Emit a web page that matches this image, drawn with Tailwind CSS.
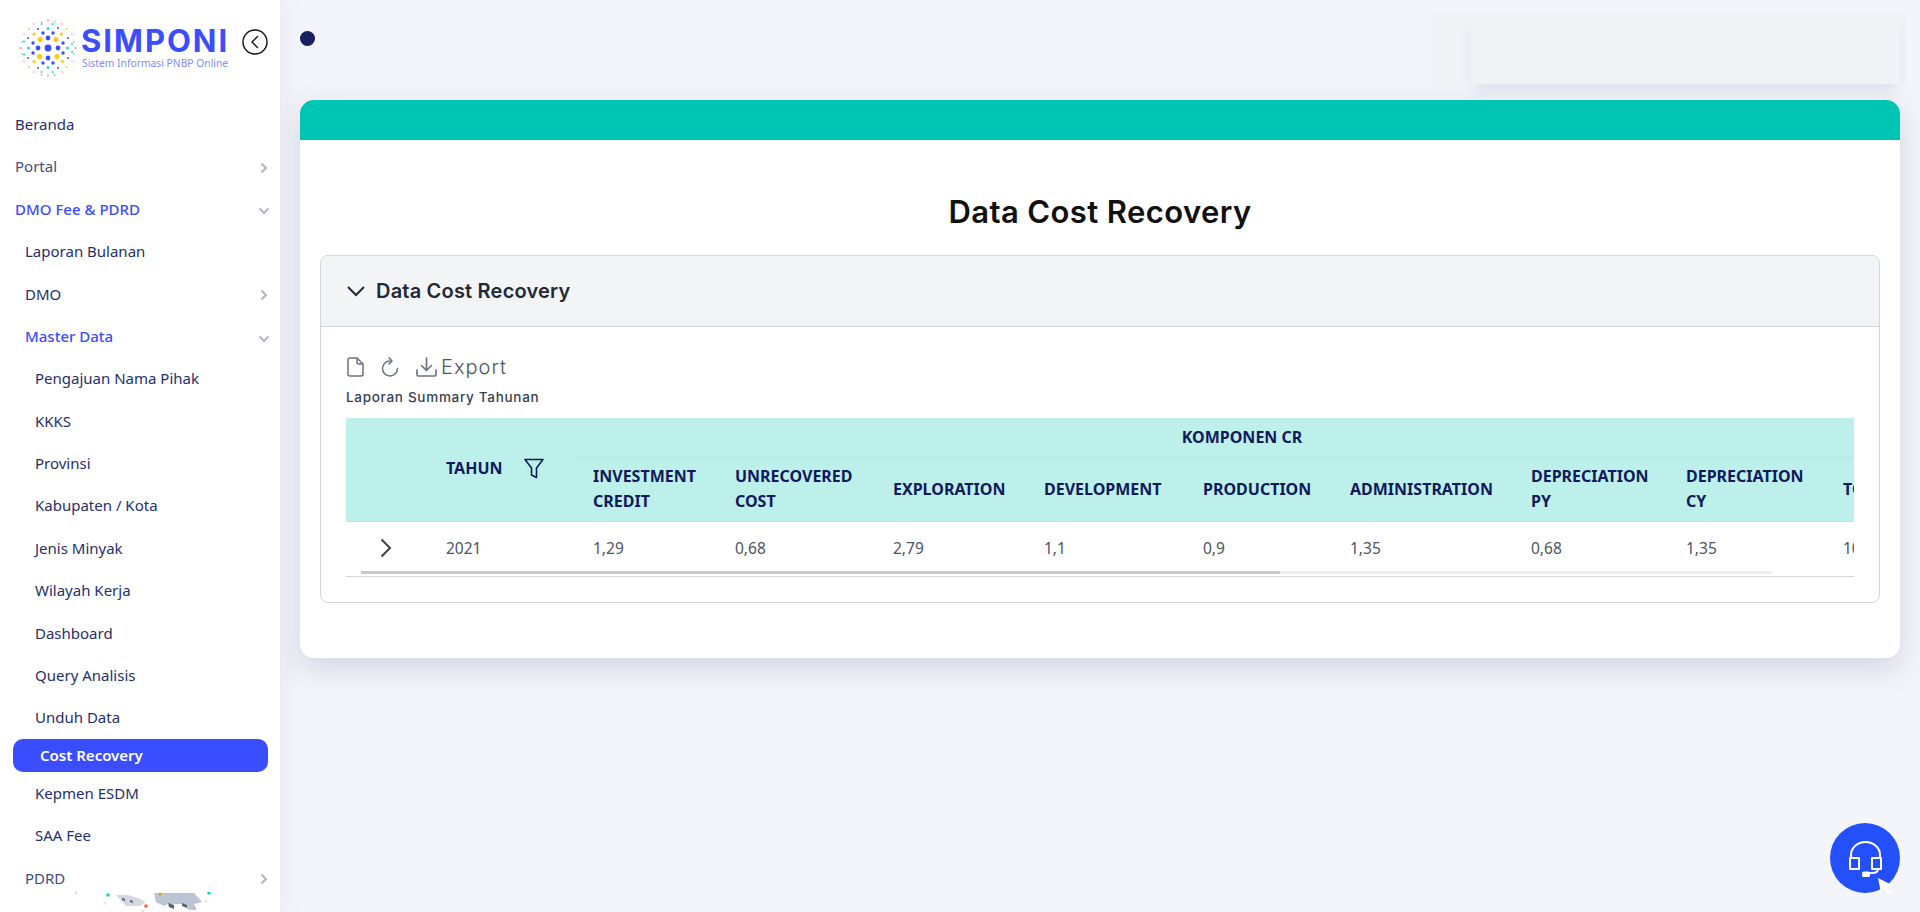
<!DOCTYPE html>
<html lang="id">
<head>
    <meta charset="UTF-8">
    <meta name="viewport" content="width=device-width, initial-scale=1.0">
    <title>SIMPONI - Data Cost Recovery</title>
    <script src="https://cdn.jsdelivr.net/npm/@tailwindcss/browser@4"></script>
</head>
<body class="flex h-[912px] overflow-hidden bg-[#f4f5fa] font-['Noto_Sans',sans-serif]">

    <!-- sidebar -->
    <aside class="relative flex w-[280px] shrink-0 flex-col overflow-hidden bg-white text-[15px] text-[#252f6c] shadow-[0_0_24px_rgba(30,40,90,0.08)]">
        <div class="flex h-[103px] shrink-0 items-start pt-[18px] pl-[18px]">
            <svg class="h-[60px] w-[60px] shrink-0" viewBox="-30 -30 60 60">
                <g fill="#3a4dff">
                    <circle r="3.4"/>
                    <circle cx="-10" r="2.4"/><circle cx="10" r="2.4"/><circle cy="-10" r="2.4"/><circle cy="10" r="2.4"/>
                    <circle cx="-5" cy="-15" r="1.7"/><circle cx="5" cy="-15" r="1.7"/><circle cx="-15" cy="-5" r="1.7"/><circle cx="15" cy="-5" r="1.7"/>
                    <circle cx="-15" cy="5" r="1.7"/><circle cx="15" cy="5" r="1.7"/><circle cx="-5" cy="15" r="1.7"/><circle cx="5" cy="15" r="1.7"/>
                    <circle cx="-10" cy="-19" r="1"/><circle cx="10" cy="-20" r="1"/><circle cx="-20" cy="-10" r="1"/><circle cx="20" cy="-10" r="1"/>
                    <circle cx="-20" cy="10" r="1"/><circle cx="20" cy="10" r="1"/><circle cx="-10" cy="20" r="1"/><circle cx="10" cy="20" r="1"/>
                </g>
                <g fill="#ffc916">
                    <circle cx="-7.8" cy="-8.6" r="2.6"/><circle cx="8" cy="-8.4" r="2.6"/><circle cx="-8.4" cy="8.6" r="2.6"/><circle cx="9" cy="8.6" r="2.6"/>
                    <circle cx="-14" cy="-14" r="1.6"/><circle cx="13.4" cy="-14" r="1.6"/><circle cx="-14" cy="13.6" r="1.6"/><circle cx="14.4" cy="13.6" r="1.6"/>
                    <circle cx="-19" cy="-19" r="0.9"/><circle cx="18.6" cy="-19" r="0.9"/><circle cx="-19" cy="19" r="0.9"/><circle cx="18.6" cy="19" r="0.9"/>
                </g>
                <g fill="#2fd6c3">
                    <circle cy="-19.5" r="1.5"/><circle cx="-19.5" r="1.5"/><circle cx="19.5" r="1.5"/><circle cy="19.5" r="1.5"/>
                    <circle cx="-6.5" cy="-24" r="1"/><circle cx="4.5" cy="-24" r="1"/><circle cx="-6.5" cy="24" r="1"/><circle cx="4.5" cy="24" r="1"/>
                    <circle cx="-24" cy="-6.5" r="1"/><circle cx="24" cy="-4" r="1"/><circle cx="-24" cy="6.5" r="1"/><circle cx="24" cy="4" r="1"/>
                    <circle cx="-6.5" cy="-26" r="0.8"/><circle cx="6.5" cy="-26" r="0.8"/><circle cx="-6.5" cy="27" r="0.8"/><circle cx="6.5" cy="27" r="0.8"/>
                    <circle cx="-26" cy="-6" r="0.8"/><circle cx="26" cy="-6" r="0.8"/><circle cx="-26" cy="6" r="0.8"/><circle cx="26" cy="6" r="0.8"/>
                </g>
                <g fill="#f68d7c">
                    <circle cy="-27.5" r="0.9"/><circle cy="27.5" r="0.9"/><circle cx="-27.5" r="0.9"/><circle cx="27.5" r="0.9"/>
                    <circle cx="-14" cy="-24" r="0.8"/><circle cx="14" cy="-24" r="0.8"/><circle cx="-24" cy="-14" r="0.8"/><circle cx="24" cy="-14" r="0.8"/>
                    <circle cx="-24" cy="13" r="0.8"/><circle cx="24" cy="13" r="0.8"/><circle cx="-14" cy="24" r="0.8"/><circle cx="14" cy="24" r="0.8"/>
                </g>
            </svg>
            <div class="mt-[8px] ml-[3px] flex w-[149px] flex-col">
                <span class="font-['Inter',sans-serif] text-[31px] leading-[30px] font-bold tracking-[2px] text-[#3a4dff]">SIMPONI</span>
                <span class="ml-[1px] text-[10.3px] leading-[14px] whitespace-nowrap text-[#7d8eff]">Sistem Informasi PNBP Online</span>
            </div>
            <svg class="mt-[11px] ml-[12px] h-[26px] w-[26px] shrink-0" viewBox="0 0 26 26" fill="none" stroke="#111" stroke-width="1.4">
                <circle cx="13" cy="13" r="12"/>
                <path d="M15.5 7.5 10 13l5.5 5.5" stroke-linecap="round"/>
            </svg>
        </div>

        <nav class="flex flex-col">
            <a class="flex h-[42.4px] items-center pl-[15px]">Beranda</a>
            <a class="flex h-[42.4px] items-center justify-between pr-[10px] pl-[15px] text-[#454d80]">Portal
                <svg class="mt-[3px] h-[12px] w-[12px]" viewBox="0 0 12 12" fill="none" stroke="#b4b5c2" stroke-width="2"><path d="M3.5 1.5 8 6l-4.500 4.500"/></svg>
            </a>
            <a class="flex h-[42.4px] items-center justify-between pr-[10px] pl-[15px] font-medium text-[#3a4dff]">DMO Fee &amp; PDRD
                <svg class="mt-[5px] h-[12px] w-[12px]" viewBox="0 0 12 12" fill="none" stroke="#b4b5c2" stroke-width="2"><path d="M1.500 3.500 6 8l4.500-4.500"/></svg>
            </a>
            <a class="flex h-[42.4px] items-center pl-[25px]">Laporan Bulanan</a>
            <a class="flex h-[42.4px] items-center justify-between pr-[10px] pl-[25px]">DMO
                <svg class="mt-[3px] h-[12px] w-[12px]" viewBox="0 0 12 12" fill="none" stroke="#b4b5c2" stroke-width="2"><path d="M3.5 1.5 8 6l-4.500 4.500"/></svg>
            </a>
            <a class="flex h-[42.4px] items-center justify-between pr-[10px] pl-[25px] font-medium text-[#3a4dff]">Master Data
                <svg class="mt-[5px] h-[12px] w-[12px]" viewBox="0 0 12 12" fill="none" stroke="#b4b5c2" stroke-width="2"><path d="M1.500 3.500 6 8l4.500-4.500"/></svg>
            </a>
            <a class="flex h-[42.4px] items-center pl-[35px]">Pengajuan Nama Pihak</a>
            <a class="flex h-[42.4px] items-center pl-[35px]">KKKS</a>
            <a class="flex h-[42.4px] items-center pl-[35px]">Provinsi</a>
            <a class="flex h-[42.4px] items-center pl-[35px]">Kabupaten / Kota</a>
            <a class="flex h-[42.4px] items-center pl-[35px]">Jenis Minyak</a>
            <a class="flex h-[42.4px] items-center pl-[35px]">Wilayah Kerja</a>
            <a class="flex h-[42.4px] items-center pl-[35px]">Dashboard</a>
            <a class="flex h-[42.4px] items-center pl-[35px]">Query Analisis</a>
            <a class="flex h-[42.4px] items-center pl-[35px]">Unduh Data</a>
            <a class="mr-[12px] ml-[13px] flex h-[33px] items-center rounded-[10px] bg-[#3a4dff] pl-[27px] font-semibold text-white">Cost Recovery</a>
            <a class="flex h-[42.4px] items-center pl-[35px]">Kepmen ESDM</a>
            <a class="flex h-[42.4px] items-center pl-[35px]">SAA Fee</a>
            <a class="flex h-[42.4px] items-center justify-between pr-[10px] pl-[25px] text-[#454d80]">PDRD
                <svg class="mt-[3px] h-[12px] w-[12px]" viewBox="0 0 12 12" fill="none" stroke="#b4b5c2" stroke-width="2"><path d="M3.5 1.5 8 6l-4.500 4.500"/></svg>
            </a>
        </nav>

        <!-- ujung ilustrasi di bawah menu -->
        <svg class="absolute bottom-0 left-[70px] h-[20px] w-[150px]" viewBox="0 0 150 20">
            <circle cx="6" cy="1" r="1" fill="#ccc"/><circle cx="38" cy="3" r="1.800" fill="#19d3bd"/><circle cx="35" cy="11" r="1.500" fill="#e4e4e4"/>
            <path d="M46 3h12l10 3 8 4-6 4H56z" fill="#d5d8e0"/><path d="M52 6l3 1v2l-3-1zM60 8l3 1v2l-3-1z" fill="#5a6270"/><circle cx="76" cy="14" r="1.800" fill="#ff5a3c"/>
            <path d="M84 1h40l8 9-8 2 3 6h-8l-5-6H98l-4 2-8-4z" fill="#bcc3d2"/><path d="M98 11l6 2v4l-5-2zM112 11l5 2v3l-5-2z" fill="#5a6270"/>
            <circle cx="90" cy="2" r="1.300" fill="#d39a1a"/><circle cx="139" cy="1" r="1.800" fill="#19d3bd"/><circle cx="136" cy="9" r="1.500" fill="#e4e4e4"/><circle cx="73" cy="19" r="1.500" fill="#e4e4e4"/>
        </svg>
    </aside>

    <!-- content -->
    <main class="flex min-w-0 flex-1 flex-col">
        <header class="flex h-[100px] shrink-0 items-start justify-between pr-[14px] pl-[20px]">
            <span class="mt-[31px] h-[15px] w-[15px] rounded-full bg-[#14205f]"></span>
            <div class="mt-[14px] h-[70px] w-[475px] bg-[#f1f2f6] pr-[6px] pl-[40px]">
                <div class="h-full bg-[#f1f2f6] shadow-[0_10px_14px_-4px_rgba(30,40,90,0.1)]"></div>
            </div>
        </header>

        <section class="mr-[20px] ml-[20px] h-[558px] overflow-hidden rounded-[14px] bg-white shadow-[0_10px_30px_rgba(30,40,90,0.16)]">
            <div class="h-[40px] bg-[#00c5b2]"></div>
            <h1 class="mt-[51px] text-center font-['Inter',sans-serif] text-[31px] leading-[42px] font-semibold tracking-[0.4px] text-[#111]">Data Cost Recovery</h1>

            <div class="mx-[20px] mt-[22px] h-[348px] rounded-[8px] border border-[#d1d5db]">
                <div class="flex h-[71px] items-center gap-[11px] rounded-t-[8px] border-b border-[#d1d5db] bg-[#f3f4f6] pl-[26px]">
                    <svg class="h-[18px] w-[18px]" viewBox="0 0 18 18" fill="none" stroke="#1f2937" stroke-width="2"><path d="M1 5l8 8 8-8"/></svg>
                    <span class="font-['Inter',sans-serif] text-[20px] font-semibold tracking-[0.2px] text-[#1f2937]">Data Cost Recovery</span>
                </div>

                <div class="px-[25px] pt-[26px]">
                    <div class="flex h-[28px] items-center text-[#6b7280]">
                        <svg class="ml-[1px] h-[20px] w-[17px]" viewBox="0 0 17 20" fill="none" stroke="currentColor" stroke-width="1.500" stroke-linejoin="round"><path d="M3 1h7l6 6v10a2 2 0 0 1-2 2H3a2 2 0 0 1-2-2V3a2 2 0 0 1 2-2z"/><path d="M10 1v4a2 2 0 0 0 2 2h4"/></svg>
                        <svg class="ml-[17px] h-[20px] w-[18px]" viewBox="0 0 18 20" fill="none" stroke="currentColor" stroke-width="1.500" stroke-linecap="round" stroke-linejoin="round"><path d="M9 4a7.500 7.500 0 1 0 7.500 7.500"/><path d="M8 0.800 11 4 8 7"/></svg>
                        <svg class="ml-[17px] h-[20px] w-[21px]" viewBox="0 0 21 20" fill="none" stroke="currentColor" stroke-width="1.700" stroke-linecap="round" stroke-linejoin="round"><path d="M10.500 1v12M5.500 8.500l5 5 5-5"/><path d="M1 13v4.500a1.500 1.500 0 0 0 1.500 1.500h16a1.500 1.500 0 0 0 1.500-1.500V13"/></svg>
                        <span class="ml-[4px] font-['Inter',sans-serif] text-[20px] font-light tracking-[1px] text-[#4b5563]">Export</span>
                    </div>
                    <p class="mt-[6px] font-['Inter',sans-serif] text-[13.5px] leading-[20px] font-medium tracking-[0.7px] text-[#374151]">Laporan Summary Tahunan</p>

                    <div class="relative mt-[11px] w-[1508px] overflow-hidden">
                        <table class="w-[1565px] table-fixed border-collapse text-[15.5px]">
                            <colgroup>
                                <col class="w-[80px]"><col class="w-[147px]"><col class="w-[142px]"><col class="w-[158px]"><col class="w-[151px]"><col class="w-[159px]"><col class="w-[147px]"><col class="w-[181px]"><col class="w-[155px]"><col class="w-[157px]"><col class="w-[88px]">
                            </colgroup>
                            <thead class="bg-[#bdf0eb] text-left text-[16px] leading-[25px] font-bold text-[#101a5c]">
                                <tr class="h-[39px]">
                                    <th rowspan="2"></th>
                                    <th rowspan="2" class="px-[20px]">
                                        <div class="flex items-center justify-between pr-[9px] pb-[1px]">TAHUN
                                            <svg class="h-[21px] w-[20px]" viewBox="0 0 20 21" fill="none" stroke="#101a5c" stroke-width="1.600" stroke-linejoin="round"><path d="M1 1.500h18l-6.500 8.500v9.500l-5-2.500v-7z"/></svg>
                                        </div>
                                    </th>
                                    <th colspan="9" class="border-b border-[#d5d5e2] text-center">KOMPONEN CR</th>
                                </tr>
                                <tr class="h-[64px] border-b border-[#d5d5e2]">
                                    <th class="px-[20px] pb-[1px]">INVESTMENT CREDIT</th>
                                    <th class="px-[20px] pb-[1px]">UNRECOVERED COST</th>
                                    <th class="px-[20px]">EXPLORATION</th>
                                    <th class="px-[20px]">DEVELOPMENT</th>
                                    <th class="px-[20px]">PRODUCTION</th>
                                    <th class="px-[20px]">ADMINISTRATION</th>
                                    <th class="px-[20px]">DEPRECIATION PY</th>
                                    <th class="px-[20px]">DEPRECIATION CY</th>
                                    <th class="px-[20px]">TOTAL</th>
                                </tr>
                            </thead>
                            <tbody class="text-[#4b5563]">
                                <tr class="h-[55px] border-b border-[#d5d5e2]">
                                    <td class="pb-[1px] pl-[34px]">
                                        <svg class="h-[20px] w-[12px]" viewBox="0 0 12 20" fill="none" stroke="#374151" stroke-width="2"><path d="M1.500 1.500 10 10l-8.500 8.500"/></svg>
                                    </td>
                                    <td class="px-[20px]">2021</td>
                                    <td class="px-[20px]">1,29</td>
                                    <td class="px-[20px]">0,68</td>
                                    <td class="px-[20px]">2,79</td>
                                    <td class="px-[20px]">1,1</td>
                                    <td class="px-[20px]">0,9</td>
                                    <td class="px-[20px]">1,35</td>
                                    <td class="px-[20px]">0,68</td>
                                    <td class="px-[20px]">1,35</td>
                                    <td class="px-[20px]">10,54</td>
                                </tr>
                            </tbody>
                        </table>
                        <!-- scrollbar -->
                        <div class="absolute bottom-[3px] left-[15px] h-[3px] w-[1411px] bg-[#eeeeee]">
                            <div class="h-full w-[919px] bg-[#c8c8c8]"></div>
                        </div>
                    </div>
                </div>
            </div>
        </section>
    </main>

    <!-- tombol bantuan -->
    <button class="fixed right-[20px] bottom-[19px] flex h-[70px] w-[70px] items-center justify-center rounded-full bg-[#2450fb]">
        <svg class="mt-[1px] h-[36px] w-[33px]" viewBox="0 0 33 36" fill="none" stroke="#fff" stroke-width="2" stroke-linejoin="round">
            <path d="M2 17v-3a14.500 13 0 0 1 29 0v3"/>
            <rect x="1" y="17" width="9" height="11"/>
            <rect x="23" y="17" width="9" height="11"/>
            <path d="M29 28c0 3-3 4-6 4h-3"/>
            <rect x="14" y="31.500" width="6" height="3.800" rx="1" fill="#fff"/>
        </svg>
        <svg class="absolute right-[8px] bottom-[-2px] h-[17px] w-[14px]" viewBox="0 0 14 17" fill="#fff"><path d="M0 0l14 7-5 2 5 6-3 2-5-6-3 4z"/></svg>
    </button>

</body>
</html>
